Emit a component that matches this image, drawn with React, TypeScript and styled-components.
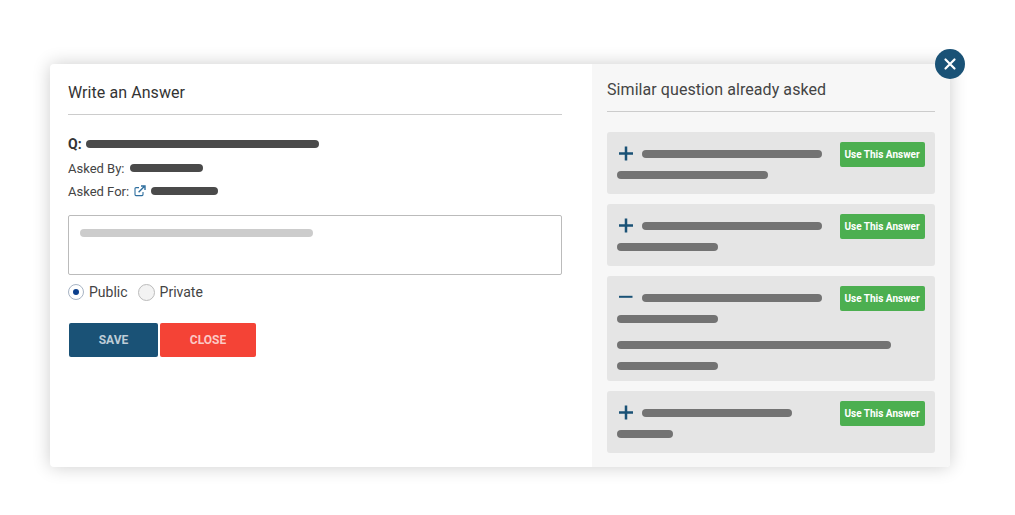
import styled, { createGlobalStyle } from 'styled-components'

const GlobalStyle = createGlobalStyle`
  html, body { margin: 0; padding: 0; background: #fff; }
  body { font-family: Roboto, "Liberation Sans", sans-serif; color: #333; }
`

const Page = styled.div`
  width: 1015px;
  height: 515px;
  padding: 64px 65px 48px 50px;
  box-sizing: border-box;
  overflow: hidden;
`

const Modal = styled.div`
  position: relative;
  display: flex;
  height: 403px;
  border-radius: 4px;
  background: #fff;
  box-shadow: 0 0 18px rgba(0, 0, 0, 0.2);
`

const CloseBtn = styled.button`
  position: absolute;
  top: -15px;
  right: -15px;
  width: 30px;
  height: 30px;
  padding: 0;
  border: 0;
  border-radius: 50%;
  background: #1a5276;
  display: flex;
  align-items: center;
  justify-content: center;
`

const Left = styled.div`
  width: 542px;
  box-sizing: border-box;
  padding: 18px 30px 0 18px;
`

const Right = styled.div`
  flex: 1;
  box-sizing: border-box;
  padding: 15px 15px 0;
  background: #f7f7f7;
  border-radius: 0 4px 4px 0;
`

const Title = styled.h2`
  margin: 0;
  height: 31px;
  padding-top: 1px;
  font-size: 16px;
  line-height: 20px;
  font-weight: 400;
  letter-spacing: 0.07px;
  color: #333;
  border-bottom: 1px solid #ccc;
`

const RightTitle = styled(Title)`
  margin-bottom: 20px;
  color: #444;
`

const Meta = styled.div<{ $top: number }>`
  display: flex;
  align-items: center;
  gap: 5px;
  height: 16px;
  margin-top: ${(p) => p.$top}px;
  font-size: 13px;
  color: #444;
`

const Strong = styled.b`
  margin-right: -1px;
  font-weight: 700;
  font-size: 14px;
  color: #333;
`

const Bar = styled.span<{ $w: number; $c?: string }>`
  display: block;
  flex: none;
  width: ${(p) => p.$w}px;
  height: 8px;
  border-radius: 4px;
  background: ${(p) => p.$c || '#4a4a4a'};
`

const TextArea = styled.div`
  height: 60px;
  box-sizing: border-box;
  margin-top: 16px;
  padding: 13px 11px;
  border: 1px solid #bbb;
  border-radius: 2px;
`

const Radios = styled.div`
  display: flex;
  align-items: center;
  height: 16px;
  margin-top: 9px;
  font-size: 14px;
  color: #444;
`

const Radio = styled.span<{ $on?: boolean }>`
  width: ${(p) => (p.$on ? 16 : 17)}px;
  height: ${(p) => (p.$on ? 16 : 17)}px;
  box-sizing: border-box;
  margin-right: 5px;
  border: 1px solid ${(p) => (p.$on ? '#a8b4c4' : '#bbb')};
  border-radius: 50%;
  background: ${(p) => (p.$on ? '#fff' : '#f3f3f3')};
  display: flex;
  align-items: center;
  justify-content: center;
  &::after {
    content: '';
    display: ${(p) => (p.$on ? 'block' : 'none')};
    width: 6px;
    height: 6px;
    border-radius: 50%;
    background: #0b3f8c;
  }
`

const RadioLabel = styled.span`
  margin-right: 10px;
`

const Actions = styled.div`
  display: flex;
  gap: 2px;
  margin-top: 23px;
  margin-left: 1px;
`

const Btn = styled.button<{ $bg: string; $w: number }>`
  width: ${(p) => p.$w}px;
  height: 34px;
  padding: 0;
  border: 0;
  border-radius: 2px;
  background: ${(p) => p.$bg};
  color: rgba(255, 255, 255, 0.72);
  font-family: inherit;
  font-size: 12px;
  font-weight: 700;
`

const Card = styled.div<{ $open?: boolean }>`
  margin-bottom: 10px;
  padding: 10px 10px ${(p) => (p.$open ? 11 : 15)}px;
  border-radius: 3px;
  background: #e5e5e5;
`

const CardHead = styled.div`
  display: flex;
  align-items: flex-start;
  height: 25px;
`

const Toggle = styled.svg`
  flex: none;
  width: 16px;
  height: 16px;
  margin: 3px 8px 0 1px;
`

const HeadBar = styled.div`
  flex: 1;
  padding-top: 8px;
`

const UseBtn = styled.button`
  flex: none;
  width: 85px;
  height: 25px;
  padding: 0 1px 0 0;
  border: 0;
  border-radius: 2px;
  background: #4caf50;
  color: #fff;
  font-family: inherit;
  font-size: 10px;
  font-weight: 700;
`

const Line = styled.div<{ $top: number }>`
  margin-top: ${(p) => p.$top}px;
`

type Row = { head: number; open?: boolean; lines: [number, number][] }

const rows: Row[] = [
  { head: 180, lines: [[151, 4]] },
  { head: 180, lines: [[101, 4]] },
  { head: 180, open: true, lines: [[101, 4], [274, 18], [101, 13]] },
  { head: 150, lines: [[56, 4]] },
]

const App = () => (
  <Page>
    <GlobalStyle />
    <Modal>
      <CloseBtn aria-label="close">
        <svg width="14" height="14" viewBox="0 0 14 14">
          <path d="M2.5 2.5l9 9M11.5 2.5l-9 9" stroke="#fff" strokeWidth="2.2" strokeLinecap="round" />
        </svg>
      </CloseBtn>
      <Left>
        <Title>Write an Answer</Title>
        <Meta $top={21}>
          <Strong>Q:</Strong>
          <Bar $w={233} />
        </Meta>
        <Meta $top={8}>
          Asked By:
          <Bar $w={73} />
        </Meta>
        <Meta $top={7}>
          Asked For:
          <svg width="12" height="12" viewBox="0 0 12 12" fill="none" stroke="#2f6f9f" strokeWidth="1.1">
            <path d="M9 7v2.6a1 1 0 0 1-1 1H2a1 1 0 0 1-1-1V3.6a1 1 0 0 1 1-1h3" />
            <path d="M4.6 7.2L10 1.8M7 1h4v4" strokeWidth="1.4" />
          </svg>
          <Bar $w={67} />
        </Meta>
        <TextArea>
          <Bar $w={233} $c="#cccccc" />
        </TextArea>
        <Radios>
          <Radio $on />
          <RadioLabel>Public</RadioLabel>
          <Radio />
          <RadioLabel>Private</RadioLabel>
        </Radios>
        <Actions>
          <Btn $bg="#1a5276" $w={89}>SAVE</Btn>
          <Btn $bg="#f44336" $w={96}>CLOSE</Btn>
        </Actions>
      </Left>
      <Right>
        <RightTitle>Similar question already asked</RightTitle>
        {rows.map((row, i) => (
          <Card key={i} $open={row.open}>
            <CardHead>
              <Toggle viewBox="0 0 16 16">
                <path
                  d={row.open ? 'M1 7.8h13.5' : 'M1 8.5h14M8 1.5v14'}
                  stroke="#1a5276"
                  strokeWidth={row.open ? 2 : 2.5}
                />
              </Toggle>
              <HeadBar>
                <Bar $w={row.head} $c="#737373" />
              </HeadBar>
              <UseBtn>Use This Answer</UseBtn>
            </CardHead>
            {row.lines.map(([w, top], j) => (
              <Line key={j} $top={top}>
                <Bar $w={w} $c="#737373" />
              </Line>
            ))}
          </Card>
        ))}
      </Right>
    </Modal>
  </Page>
)

export default App
